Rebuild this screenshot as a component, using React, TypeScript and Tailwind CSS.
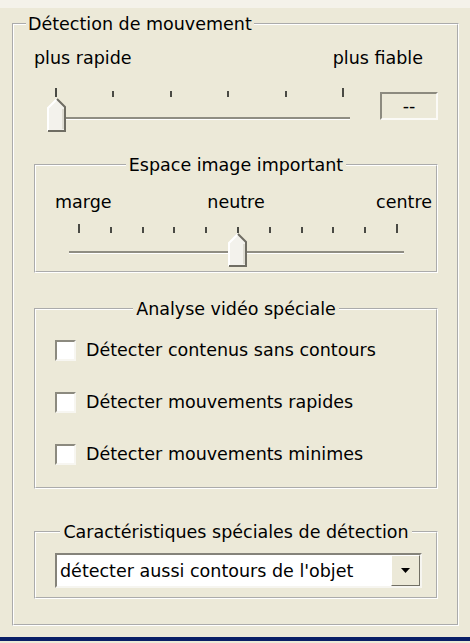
import React from 'react';

const font = { fontFamily: '"DejaVu Sans", Verdana, sans-serif' };

function Thumb() {
  return (
    <svg width="20" height="34" viewBox="0 0 20 34" className="block">
      <polygon points="1,10 10,1 19,10 19,33 1,33" fill="#f3f2ec" />
      <polyline points="1,33 1,10 10,1" fill="none" stroke="#ffffff" strokeWidth="2" />
      <polyline points="10,1 18,9 18,33 1,33" fill="none" stroke="#6f6d63" strokeWidth="2" />
      <line x1="16" y1="11" x2="16" y2="31" stroke="#c9c6b8" strokeWidth="1" />
    </svg>
  );
}

function Ticks({ count }: { count: number }) {
  return (
    <div className="flex justify-between items-end">
      {Array.from({ length: count }).map((_, i) => (
        <div
          key={i}
          className={`w-[2px] bg-[#4a4a44] ${i === 0 || i === count - 1 ? 'h-[9px]' : 'h-[6px]'}`}
        />
      ))}
    </div>
  );
}

function Track() {
  return <div className="h-[3px] border-t-2 border-[#8f8d82] bg-white" />;
}

function Checkbox({ label }: { label: string }) {
  return (
    <div className="flex items-center h-[20px]">
      <div className="ml-[19px] w-[21px] h-[21px] border-2 border-t-[#8c8a7f] border-l-[#8c8a7f] border-b-[#f7f6f1] border-r-[#f7f6f1] bg-white" />
      <span className="ml-[10px]">{label}</span>
    </div>
  );
}

export default function App() {
  return (
    <div
      className="w-[470px] h-[643px] bg-[#ece9d8] text-[17.5px] leading-[20px] text-black flex flex-col"
      style={font}
    >
      <div className="h-[8px] bg-[#f4f2ea]" />
      <fieldset className="mt-[6px] ml-[12px] w-[446px] h-[612px] border-2 border-white [border-style:groove] pl-[12px] pr-[19px]">
        <legend className="px-[2px]">Détection de mouvement</legend>
        <div className="ml-[8px]">
          {/* plus rapide / plus fiable */}
          <div className="mt-[14px] flex">
            <span>plus rapide</span>
            <span className="ml-auto mr-[15px]">plus fiable</span>
          </div>

          {/* main slider */}
          <div className="mt-[20px] flex items-start">
            <div className="w-[320px]">
              <div className="ml-[21px] w-[289px] h-[10px]">
                <Ticks count={6} />
              </div>
              <div className="relative h-[34px]">
                <div className="ml-[20px] w-[296px] pt-[19px]">
                  <Track />
                </div>
                <div className="absolute left-[13px] top-0">
                  <Thumb />
                </div>
              </div>
            </div>
            <div className="ml-[26px] mt-[4px] w-[58px] h-[28px] border-2 border-t-[#8c8a7f] border-l-[#8c8a7f] border-b-[#fbfaf6] border-r-[#fbfaf6] flex items-center justify-center">
              --
            </div>
          </div>

          {/* Espace image important */}
          <fieldset className="mt-[23px] h-[118px] border-2 border-white [border-style:groove]">
            <legend className="mx-auto px-[3px]">Espace image important</legend>
            <div className="mt-[17px] flex">
              <span className="ml-[19px] w-[100px]">marge</span>
              <span className="ml-[41px] w-[80px] text-center">neutre</span>
              <span className="w-[156px] text-right">centre</span>
            </div>
            <div className="mt-[12px] ml-[42px] w-[320px] h-[9px]">
              <Ticks count={11} />
            </div>
            <div className="relative h-[34px]">
              <div className="ml-[33px] w-[335px] pt-[18px]">
                <Track />
              </div>
              <div className="absolute left-[192px] top-0">
                <Thumb />
              </div>
            </div>
          </fieldset>

          {/* Analyse vidéo spéciale */}
          <fieldset className="mt-[26px] h-[190px] border-2 border-white [border-style:groove]">
            <legend className="mx-auto px-[3px]">Analyse vidéo spéciale</legend>
            <div className="mt-[21px] flex flex-col gap-[32px]">
              <Checkbox label="Détecter contenus sans contours" />
              <Checkbox label="Détecter mouvements rapides" />
              <Checkbox label="Détecter mouvements minimes" />
            </div>
          </fieldset>

          {/* Caractéristiques spéciales de détection */}
          <fieldset className="mt-[33px] h-[77px] border-2 border-white [border-style:groove]">
            <legend className="mx-auto px-[3px]">Caractéristiques spéciales de détection</legend>
            <div className="mt-[11px] ml-[19px] w-[367px] h-[35px] border-2 border-t-[#85837a] border-l-[#85837a] border-b-[#f6f5f0] border-r-[#f6f5f0] bg-white flex items-center">
              <span className="ml-[3px] flex-1">détecter aussi contours de l'objet</span>
              <div className="w-[29px] h-[31px] bg-[#ece9d8] border border-t-white border-l-white border-b-[#716f64] border-r-[#716f64] flex items-center justify-center">
                <svg width="9" height="5" viewBox="0 0 9 5">
                  <polygon points="0,0 9,0 4.5,5" fill="#000" />
                </svg>
              </div>
            </div>
          </fieldset>
        </div>
      </fieldset>
      <div className="mt-[11px] h-[4px] bg-[#0a1f66]" />
    </div>
  );
}
